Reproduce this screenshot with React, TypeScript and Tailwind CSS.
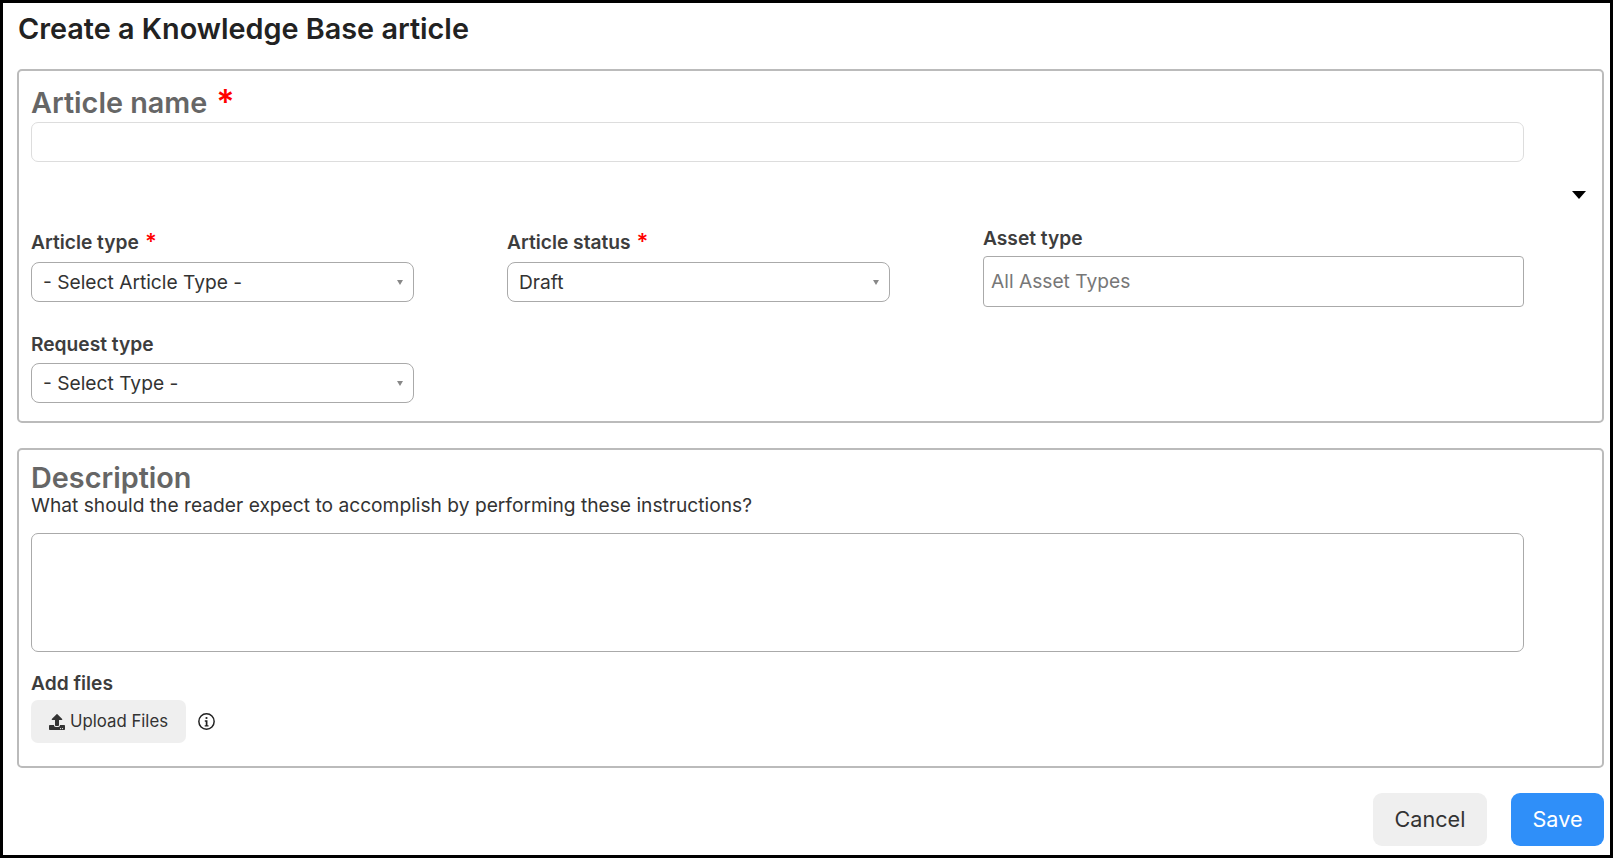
import { FaUpload } from "react-icons/fa";

const Caret = () => (
  <span className="w-0 h-0 border-l-[3px] border-r-[3px] border-t-[5px] border-l-transparent border-r-transparent border-t-[#888]" />
);

const SelectBox = ({ value }: { value: string }) => (
  <div className="w-[383px] h-[40px] flex items-center justify-between border border-[#aaa] rounded-[8px] pl-[11px] pr-[10px] text-[19.2px] text-[#333]">
    <span>{value}</span>
    <Caret />
  </div>
);

const Label = ({ text, required }: { text: string; required?: boolean }) => (
  <p className="text-[19.2px] leading-[23px] font-semibold text-[#3d3d3d] flex items-start">
    {text}
    {required && <span className="text-[#f00] text-[22px] leading-[20px] ml-[6px]">*</span>}
  </p>
);

const InfoIcon = () => (
  <svg viewBox="0 0 16 16" className="w-[17px] h-[17px] text-[#222]" fill="currentColor">
    <circle cx="8" cy="8" r="7.2" fill="none" stroke="currentColor" strokeWidth="1.4" />
    <circle cx="8" cy="4.7" r="1.05" />
    <path d="M6.4 6.9h2.5v4.6h1v1.3H6.3v-1.3h1V8.2h-.9z" />
  </svg>
);

const App = () => {
  return (
    <div className="font-['Inter',sans-serif] h-[858px] border-[3px] border-black bg-white pl-[14px] pr-[6px] flex flex-col">
      {/* Title */}
      <h1 className="text-[28.8px] leading-[32px] font-semibold text-[#222] pl-[1px] mt-[10px]">
        Create a Knowledge Base article
      </h1>

      {/* Main fields */}
      <div className="mt-[24px] border-2 border-[#bbb] rounded-[5px] pl-[12px] pt-[16px] pb-[18px] flex flex-col">
        <p className="text-[28.8px] leading-[32px] font-semibold text-[#666] flex items-start">
          Article name
          <span className="text-[#f00] text-[34px] leading-[30px] ml-[9px]">*</span>
        </p>
        <div className="mt-[3px] w-[1493px] h-[40px] border border-[#ddd] rounded-[7px]" />

        <div className="h-[65px] flex items-center justify-end pr-[16px]">
          <span className="w-0 h-0 border-l-[7px] border-r-[7px] border-t-[8px] border-l-transparent border-r-transparent border-t-black" />
        </div>

        <div className="flex items-start">
          <div className="w-[476px] pt-[4px] flex flex-col gap-[8px]">
            <Label text="Article type" required />
            <SelectBox value="- Select Article Type -" />
          </div>
          <div className="w-[476px] pt-[4px] flex flex-col gap-[8px]">
            <Label text="Article status" required />
            <SelectBox value="Draft" />
          </div>
          <div className="flex flex-col gap-[6px]">
            <Label text="Asset type" />
            <div className="w-[541px] h-[51px] flex items-center border border-[#aaa] rounded-[4px] px-[7px] text-[19.2px] text-[#777]">
              All Asset Types
            </div>
          </div>
        </div>

        <div className="mt-[26px] flex flex-col gap-[7px]">
          <Label text="Request type" />
          <SelectBox value="- Select Type -" />
        </div>
      </div>

      {/* Description */}
      <div className="mt-[25px] border-2 border-[#bbb] rounded-[5px] pl-[12px] pt-[12px] pb-[23px] flex flex-col">
        <p className="text-[28.8px] leading-[32px] font-semibold text-[#666]">Description</p>
        <p className="text-[19.2px] leading-[23px] text-[#333]">
          What should the reader expect to accomplish by performing these instructions?
        </p>
        <div className="mt-[16px] w-[1493px] h-[119px] border border-[#aaa] rounded-[7px]" />
        <div className="mt-[20px]">
          <Label text="Add files" />
        </div>
        <div className="mt-[5px] flex items-center gap-[12px]">
          <button className="w-[155px] h-[43px] bg-[#efefef] rounded-[7px] flex items-center justify-center gap-[5px] text-[16.8px] text-[#333]">
            <FaUpload className="w-[16px] h-[16px] text-[#333]" />
            Upload Files
          </button>
          <InfoIcon />
        </div>
      </div>

      {/* Actions */}
      <div className="mt-[25px] flex justify-end gap-[24px]">
        <button className="w-[114px] h-[53px] bg-[#efefef] rounded-[9px] text-[21.6px] text-[#333]">
          Cancel
        </button>
        <button className="w-[93px] h-[53px] bg-[#2f8ff9] rounded-[9px] text-[21.6px] text-white">
          Save
        </button>
      </div>
    </div>
  );
};

export default App;
